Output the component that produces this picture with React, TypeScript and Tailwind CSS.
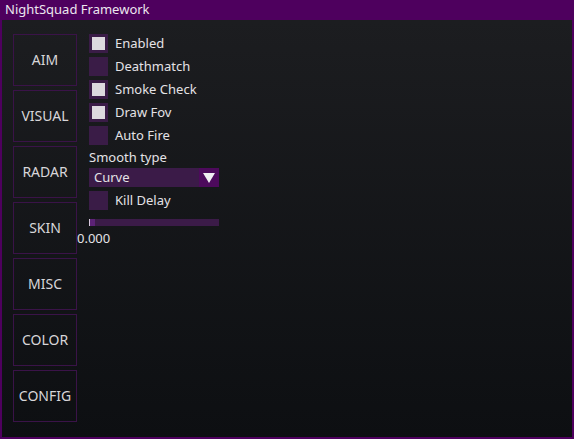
import React from "react";

const tabs = ["AIM", "VISUAL", "RADAR", "SKIN", "MISC", "COLOR", "CONFIG"];

const Check = ({ label, on }: { label: string; on?: boolean }) => (
  <div className="flex h-[23px] items-center gap-[7px]">
    <div className="flex h-[19px] w-[19px] items-center justify-center bg-[#3a1c47]">
      {on && <div className="h-[13px] w-[13px] bg-[#dcd9de]" />}
    </div>
    <span>{label}</span>
  </div>
);

export default function App() {
  return (
    <div
      className="flex h-[439px] w-[574px] flex-col bg-[#4e005e] text-[13px] text-[#e4e2e6]"
      style={{ fontFamily: "'Noto Sans', 'Open Sans', sans-serif" }}
    >
      <div className="flex h-[20px] items-center px-[5px] text-[#ece6ee]">NightSquad Framework</div>
      <div className="mx-[2px] mb-[2px] flex flex-1 gap-[12px] bg-gradient-to-b from-[#1c1d20] to-[#0d0f12] pl-[11px] pt-[12px]">
        <div className="mt-[2px] flex w-[64px] flex-col gap-[4px]">
          {tabs.map((t) => (
            <div
              key={t}
              className="flex h-[52px] items-center justify-center border border-[#3a1348] pb-[1px] text-[14px] text-[#d8d6d9]"
            >
              {t}
            </div>
          ))}
        </div>
        <div className="flex w-[130px] flex-col">
          <Check label="Enabled" on />
          <Check label="Deathmatch" />
          <Check label="Smoke Check" on />
          <Check label="Draw Fov" on />
          <Check label="Auto Fire" />
          <div className="flex h-[21px] items-center">Smooth type</div>
          <div className="flex h-[19px] items-center bg-[#3b1b48]">
            <span className="flex-1 pl-[5px]">Curve</span>
            <div className="flex h-full w-[20px] items-center justify-center bg-[#4d0a5c]">
              <svg width="12" height="10" viewBox="0 0 12 10">
                <path d="M0 0 H12 L6 10 Z" fill="#f0eef2" />
              </svg>
            </div>
          </div>
          <div className="mt-[2px]">
            <Check label="Kill Delay" />
          </div>
          <div className="mt-[7px] flex h-[7px] bg-[#3b1b48]">
            <div className="w-[1px] bg-[#d8c8de]" />
            <div className="w-[5px] bg-[#5c2276]" />
          </div>
          <div className="-ml-[12px] mt-[3px] leading-[18px]">0.000</div>
        </div>
      </div>
    </div>
  );
}
